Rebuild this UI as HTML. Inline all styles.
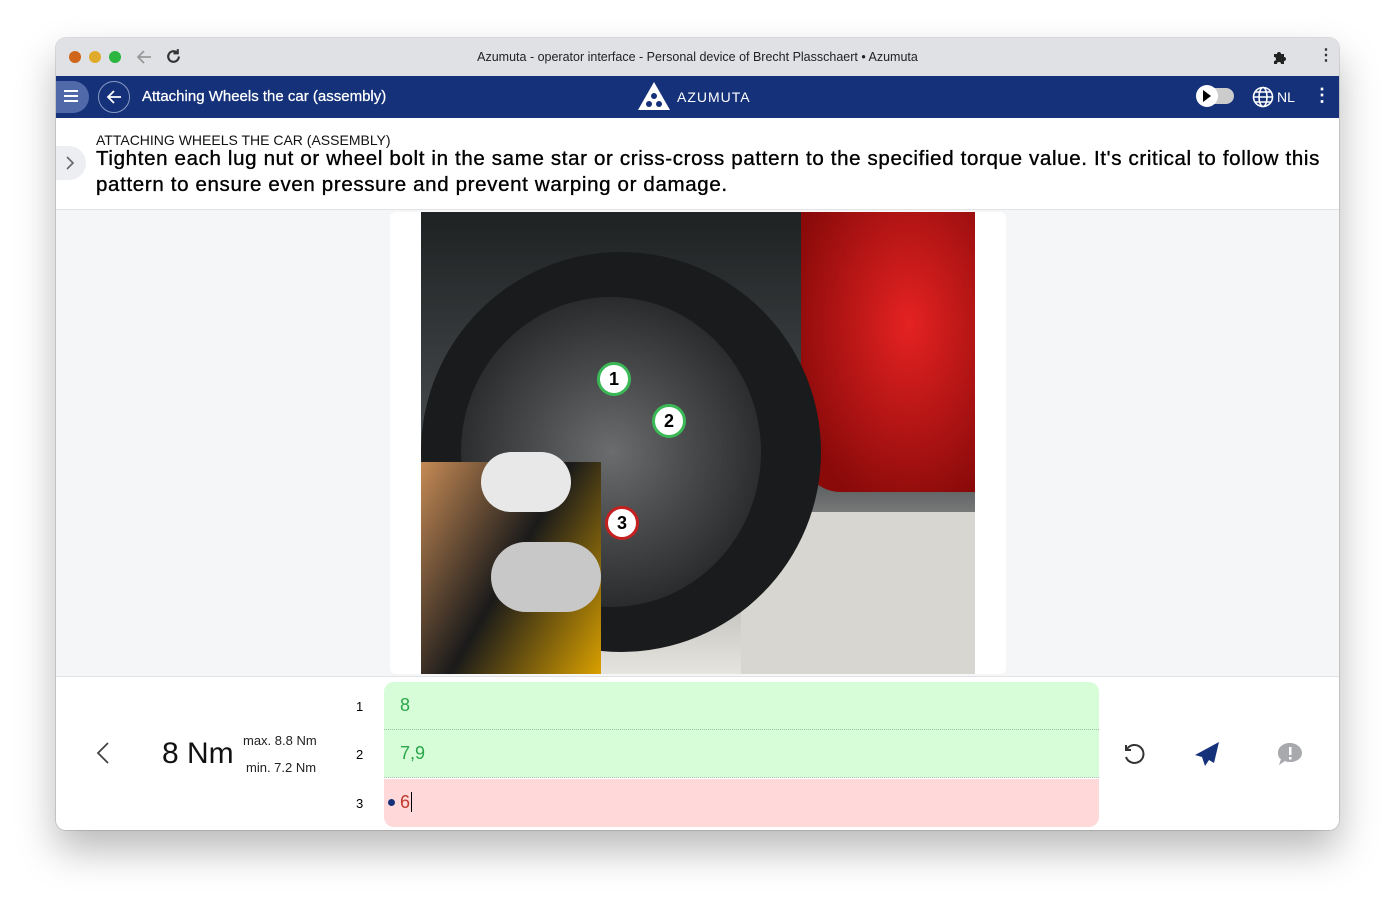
<!DOCTYPE html>
<html><head><meta charset="utf-8"><style>
*{margin:0;padding:0;box-sizing:border-box}
body{width:1395px;height:905px;background:#fff;font-family:"Liberation Sans",Arial,sans-serif;position:relative;overflow:hidden}
.win{position:absolute;left:56px;top:38px;width:1283px;height:792px;border-radius:10px;overflow:hidden;box-shadow:0 20px 40px rgba(0,0,0,.28),0 0 0 1px rgba(0,0,0,.12);background:#f5f6f7}
.tb{position:absolute;left:0;top:0;width:100%;height:38px;background:#dfe1e5}
.dot{position:absolute;top:13px;width:12px;height:12px;border-radius:50%}
.title{position:absolute;left:0;width:100%;top:12px;text-align:center;font-size:12.5px;color:#222}
.nav{position:absolute;top:38px;left:0;width:100%;height:42px;background:#143179;color:#fff}
.hdr{position:absolute;top:80px;left:0;width:100%;height:92px;background:#fff;border-bottom:1px solid #e3e3e3}
.bot{position:absolute;top:638px;left:0;width:100%;height:154px;background:#fff;border-top:1px solid #e3e3e3}
.row{position:absolute;left:328px;width:715px;height:48px;font-size:18px;padding:13px 16px}
</style></head><body>
<div class="win">
 <div class="tb">
  <div class="dot" style="left:13px;background:#d0661b"></div>
  <div class="dot" style="left:33px;background:#e0aa2c"></div>
  <div class="dot" style="left:53px;background:#2bb640"></div>
  <svg style="position:absolute;left:80px;top:11px" width="16" height="16" viewBox="0 0 16 16" fill="none" stroke="#999" stroke-width="1.8"><path d="M15 8H2M8 2L2 8l6 6"/></svg>
  <svg style="position:absolute;left:109px;top:10px" width="17" height="17" viewBox="0 0 16 16" fill="none" stroke="#333" stroke-width="2"><path d="M13 8a5 5 0 1 1-2-4"/><path d="M12 1v4H8" /></svg>
  <div class="title">Azumuta - operator interface - Personal device of Brecht Plasschaert • Azumuta</div>
  <svg style="position:absolute;left:1216px;top:11px" width="16" height="16" viewBox="0 0 16 16"><path d="M2 5h3a2 2 0 1 1 4 0h3v3a2 2 0 1 1 0 4v3H9a2 2 0 1 0-4 0H2v-3a2 2 0 1 0 0-4z" fill="#222"/></svg>
  <div style="position:absolute;left:1262px;top:7px;font-size:16px;color:#333;font-weight:bold">⋮</div>
 </div>
 <div class="nav">
  <div style="position:absolute;left:0;top:5px;width:33px;height:32px;background:#5069a8;border-radius:0 16px 16px 0"></div>
  <div style="position:absolute;left:8px;top:14px;width:14px;height:2px;background:#fff;box-shadow:0 5px 0 #fff,0 10px 0 #fff"></div>
  <div style="position:absolute;left:42px;top:5px;width:32px;height:32px;border:1px solid #8a9ac4;border-radius:50%"></div>
  <svg style="position:absolute;left:50px;top:13px" width="16" height="16" viewBox="0 0 16 16" fill="none" stroke="#fff" stroke-width="1.8"><path d="M15 8H2M8 2L2 8l6 6"/></svg>
  <div style="position:absolute;left:86px;top:12px;font-size:15px;-webkit-text-stroke:.25px #fff">Attaching Wheels the car (assembly)</div>
  <svg style="position:absolute;left:582px;top:6px" width="32" height="28" viewBox="0 0 32 28"><path d="M16 0L32 28H0Z" fill="#fff"/><circle cx="16" cy="14" r="3" fill="#143179"/><circle cx="11" cy="22" r="3" fill="#143179"/><circle cx="21" cy="22" r="3" fill="#143179"/></svg>
  <div style="position:absolute;left:621px;top:13px;font-size:14px;letter-spacing:1px">AZUMUTA</div>
  <div style="position:absolute;left:1141px;top:12px;width:37px;height:16px;background:#ccc;border-radius:8px"></div>
  <div style="position:absolute;left:1140px;top:9px;width:22px;height:22px;background:#fff;border-radius:50%"></div>
  <div style="position:absolute;left:1147px;top:14px;border-left:8px solid #000;border-top:6px solid transparent;border-bottom:6px solid transparent"></div>
  <svg style="position:absolute;left:1196px;top:10px" width="22" height="22" viewBox="0 0 22 22" fill="none" stroke="#fff" stroke-width="1.6"><circle cx="11" cy="11" r="9.5"/><ellipse cx="11" cy="11" rx="4" ry="9.5"/><path d="M1.5 11h19M3 6h16M3 16h16"/></svg>
  <div style="position:absolute;left:1221px;top:13px;font-size:14px">NL</div>
  <div style="position:absolute;left:1257px;top:9px;font-size:18px;font-weight:bold">⋮</div>
 </div>
 <div class="hdr">
  <div style="position:absolute;left:0;top:28px;width:30px;height:34px;background:#eceef1;border-radius:0 17px 17px 0"></div>
  <svg style="position:absolute;left:9px;top:38px" width="10" height="14" viewBox="0 0 10 14" fill="none" stroke="#666" stroke-width="1.6"><path d="M2 1l6 6-6 6"/></svg>
  <div style="position:absolute;left:40px;top:14px;font-size:14px;color:#111">ATTACHING WHEELS THE CAR (ASSEMBLY)</div>
  <div style="position:absolute;left:40px;top:28px;width:1236px;font-size:20.5px;line-height:26px;color:#000;letter-spacing:.65px;-webkit-text-stroke:.35px #000">Tighten each lug nut or wheel bolt in the same star or criss-cross pattern to the specified torque value. It's critical to follow this pattern to ensure even pressure and prevent warping or damage.</div>
 </div>
 <div style="position:absolute;left:334px;top:174px;width:616px;height:462px;background:#fff;border-radius:6px"></div>
 <div style="position:absolute;left:365px;top:174px;width:554px;height:462px;overflow:hidden;background:linear-gradient(180deg,#1e2223 0%,#4b4e50 55%,#b9b9b6 80%,#e6e4de 100%)">
  <div style="position:absolute;left:380px;top:0;width:180px;height:280px;background:radial-gradient(ellipse at 60% 40%,#e52222,#8a0a0a 80%);border-radius:0 0 0 40px"></div>
  <div style="position:absolute;left:320px;top:300px;width:240px;height:162px;background:#d8d6d0"></div>
  <div style="position:absolute;left:0;top:40px;width:400px;height:400px;border-radius:50%;background:#1a1b1c"></div>
  <div style="position:absolute;left:40px;top:85px;width:300px;height:310px;border-radius:50%;background:radial-gradient(circle,#6a6c6e 0%,#454749 40%,#2a2b2c 72%)"></div>
  <div style="position:absolute;left:0;top:250px;width:180px;height:212px;background:linear-gradient(120deg,#c58a55,#1a1a1a 50%,#d9a000)"></div>
  <div style="position:absolute;left:60px;top:240px;width:90px;height:60px;border-radius:30px;background:#e8e8e8"></div>
  <div style="position:absolute;left:70px;top:330px;width:110px;height:70px;border-radius:35px;background:#c8c8c8"></div>
  <div style="position:absolute;left:176px;top:150px;width:34px;height:34px;border-radius:50%;background:#fff;border:3px solid #3cb957;text-align:center;font:bold 18px/28px 'Liberation Sans'">1</div>
  <div style="position:absolute;left:231px;top:192px;width:34px;height:34px;border-radius:50%;background:#fff;border:3px solid #3cb957;text-align:center;font:bold 18px/28px 'Liberation Sans'">2</div>
  <div style="position:absolute;left:184px;top:294px;width:34px;height:34px;border-radius:50%;background:#fff;border:3px solid #c52020;text-align:center;font:bold 18px/28px 'Liberation Sans'">3</div>
 </div>
 <div class="bot">
  <svg style="position:absolute;left:40px;top:64px" width="14" height="24" viewBox="0 0 14 24" fill="none" stroke="#444" stroke-width="1.8"><path d="M12 2L2 12l10 10"/></svg>
  <div style="position:absolute;left:106px;top:60px;font-size:30px;color:#111">8 Nm</div>
  <div style="position:absolute;left:187px;top:56px;font-size:13px;color:#222">max. 8.8 Nm</div>
  <div style="position:absolute;left:190px;top:83px;font-size:13px;color:#222">min. 7.2 Nm</div>
  <div style="position:absolute;left:300px;top:22px;font-size:13px">1</div>
  <div style="position:absolute;left:300px;top:70px;font-size:13px">2</div>
  <div style="position:absolute;left:300px;top:119px;font-size:13px">3</div>
  <div class="row" style="top:5px;background:#d6fdd8;color:#2aa64a;border-radius:10px 10px 0 0;border-bottom:1px dotted #9bc79d">8</div>
  <div class="row" style="top:53px;background:#d6fdd8;color:#2aa64a;border-bottom:1px dotted #bbb">7,9</div>
  <div class="row" style="top:102px;background:#ffd9d9;color:#c0392b;border-radius:0 0 10px 10px"><span style="display:inline-block;width:7px;height:7px;border-radius:50%;background:#143179;margin:0 5px 2px -12px"></span>6<span style="border-left:1px solid #000;margin-left:1px"></span></div>
  <svg style="position:absolute;left:1066px;top:66px" width="24" height="24" viewBox="0 0 24 24" fill="none" stroke="#333" stroke-width="2"><path d="M5 6a9 9 0 1 1-1 8"/><path d="M4 2v5h5"/></svg>
  <svg style="position:absolute;left:1138px;top:64px" width="26" height="26" viewBox="0 0 26 26"><path d="M25 1L1 14l7 2 3 9 4-6 5 3z" fill="#143179"/></svg>
  <svg style="position:absolute;left:1221px;top:64px" width="26" height="26" viewBox="0 0 26 26"><path d="M13 2C6 2 1 6 1 12c0 3 1 5 3 6l-2 6 6-4c2 1 3 1 5 1 7 0 12-4 12-9S20 2 13 2z" fill="#a7a9ac"/><rect x="12" y="6" width="2.5" height="8" fill="#fff"/><rect x="12" y="16" width="2.5" height="2.5" fill="#fff"/></svg>
 </div>
</div>
</body></html>
